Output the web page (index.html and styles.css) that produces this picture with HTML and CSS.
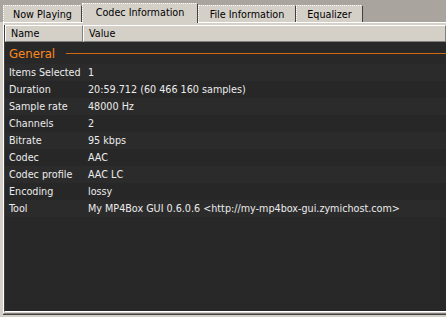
FILE: index.html
```html
<!DOCTYPE html>
<html>
<head>
    <title>Properties</title>
    <link rel="stylesheet" href="styles.css">
</head>
<body>
    <div class="tabs">
        <div class="tab tab-now">Now Playing</div>
        <div class="tab tab-codec active">Codec Information</div>
        <div class="tab tab-file">File Information</div>
        <div class="tab tab-eq">Equalizer</div>
    </div>
    <div class="panel">
        <div class="list">
            <div class="list-header">
                <div class="col col-name">Name</div>
                <div class="col col-value">Value</div>
            </div>
            <div class="list-body">
                <div class="group">
                    <span class="group-title">General</span>
                    <span class="group-line"></span>
                </div>
                <div class="row"><div class="cell-name">Items Selected</div><div class="cell-value">1</div></div>
                <div class="row"><div class="cell-name">Duration</div><div class="cell-value">20:59.712 (60 466 160 samples)</div></div>
                <div class="row"><div class="cell-name">Sample rate</div><div class="cell-value">48000 Hz</div></div>
                <div class="row"><div class="cell-name">Channels</div><div class="cell-value">2</div></div>
                <div class="row"><div class="cell-name">Bitrate</div><div class="cell-value">95 kbps</div></div>
                <div class="row"><div class="cell-name">Codec</div><div class="cell-value">AAC</div></div>
                <div class="row"><div class="cell-name">Codec profile</div><div class="cell-value">AAC LC</div></div>
                <div class="row"><div class="cell-name">Encoding</div><div class="cell-value">lossy</div></div>
                <div class="row"><div class="cell-name">Tool</div><div class="cell-value">My MP4Box GUI 0.6.0.6 &lt;http://my-mp4box-gui.zymichost.com&gt;</div></div>
            </div>
        </div>
    </div>
</body>
</html>
```

FILE: styles.css
```css
html, body {
    margin: 0;
    height: 317px;
    overflow: hidden;
}

body {
    background-color: #d4d0c8;
    font-family: "DejaVu Sans", sans-serif;
    font-stretch: condensed;
    font-size: 10.7px;
    color: #000;
}

/* tab strip */
.tabs {
    display: flex;
    align-items: flex-end;
    height: 22px;
    padding-left: 3px;
    background-color: #a9a59e;
}

.tab {
    box-sizing: border-box;
    height: 17px;
    line-height: 17px;
    text-align: center;
    background-color: #d4d0c8;
    border-top: 1px dotted #ffffff;
    border-left: 1px dotted #ffffff;
    border-right: 1px solid #404040;
}

.tab-now { width: 79px; }
.tab-codec { width: 116px; }
.tab-file { width: 98px; }
.tab-eq { width: 67px; }

.tab.active {
    height: 20px;
    line-height: 18px;
    margin-bottom: -1px;
    position: relative;
}

/* panel */
.panel {
    border-top: 1px solid #ffffff;
    border-left: 1px solid #ffffff;
    border-bottom: 1px solid #808080;
    box-shadow: 0 1px 0 #404040;
    padding: 2px 0 1px 0;
    margin-left: 3px;
}

.list {
    border-left: 1px solid #404040;
    border-bottom: 1px solid #ffffff;
}

.list-header {
    display: flex;
    height: 17px;
    background-color: #d4d0c8;
}

.col {
    box-sizing: border-box;
    height: 17px;
    line-height: 15px;
    padding-left: 5px;
    border-top: 1px solid #ffffff;
    border-left: 1px solid #ffffff;
    border-right: 1px solid #808080;
    border-bottom: 1px solid #808080;
}

.col-name { width: 78px; }
.col-value { flex: 1; }

.list-body {
    height: 269px;
    background-color: #282828;
    color: #ececec;
}

.group {
    display: flex;
    align-items: center;
    height: 22px;
    padding-left: 4px;
}

.group-title {
    color: #ff8a1c;
    font-size: 13px;
}

.group-line {
    flex: 1;
    height: 1px;
    margin-left: 11px;
    background-color: #d06a10;
}

.row {
    display: flex;
    height: 17px;
    line-height: 17px;
}

.row:nth-child(even) {
    background-color: #2b2b2b;
}

.row:nth-child(odd) {
    background-color: #272727;
}

.cell-name {
    width: 79px;
    padding-left: 4px;
    box-sizing: border-box;
    white-space: nowrap;
}

.cell-value {
    padding-left: 4px;
    white-space: nowrap;
}
```
